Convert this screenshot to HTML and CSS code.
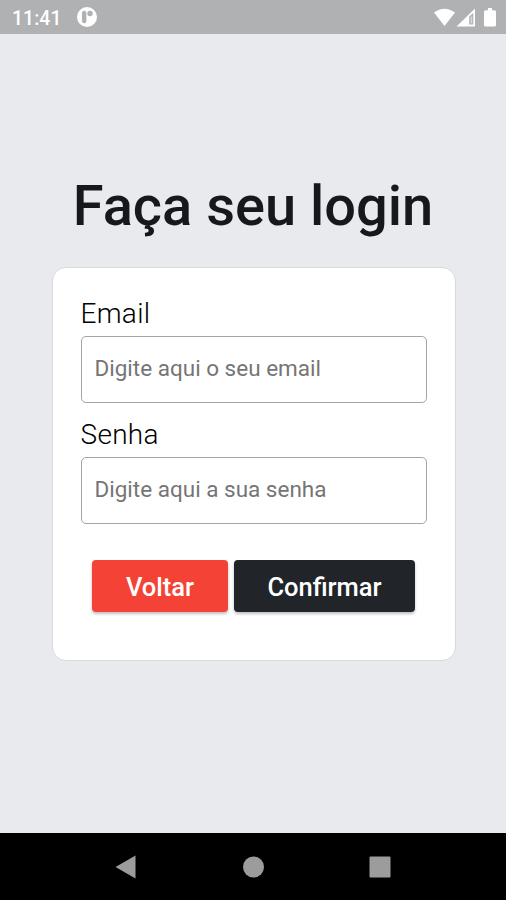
FILE: index.html
```html
<!DOCTYPE html>
<html lang="pt-BR">
  <head>
    <meta charset="UTF-8" />
    <meta name="viewport" content="width=device-width, initial-scale=1.0" />
    <title>Login</title>
    <link rel="stylesheet" href="styles.css">
  </head>
  <body>
    <header class="status-bar">
      <span class="clock">11:41</span>
      <svg class="app-icon" width="20" height="20" viewBox="0 0 20 20">
        <circle cx="10" cy="10" r="10" fill="#fff" />
        <rect x="5" y="3.800" width="4.400" height="12.400" rx="2.200" fill="#b0b1b2" />
        <circle cx="13" cy="6.500" r="2.700" fill="#b0b1b2" />
      </svg>
      <svg class="system-icons" width="63" height="20" viewBox="0 0 63 20">
        <path d="M0 5.6Q10.500-2 21 5.600L10.500 19Z" fill="#fff" />
        <path d="M22.500 19.500L41 1.500V19.500Z" fill="#fff" />
        <path d="M35.200 9.500L39.300 6V17.500H35.200Z" fill="#b0b1b2" />
        <path d="M36.600 9.500H38.200V16.500H36.600Z" fill="#d8d8d9" />
        <path d="M51.500 3.200H54V1H58V3.200H60.500Q62 3.200 62 4.700V18Q62 19.500 60.500 19.500H51.500Q50 19.500 50 18V4.700Q50 3.200 51.500 3.200Z" fill="#fff" />
      </svg>
    </header>

    <main class="login-page">
      <h1>Faça seu login</h1>
      <form class="login-card" id="loginForm">
        <div class="input-group">
          <label for="email">Email</label>
          <input type="email" id="email" placeholder="Digite aqui o seu email" autocomplete="off" />
        </div>
        <div class="input-group">
          <label for="senha">Senha</label>
          <input type="password" id="senha" placeholder="Digite aqui a sua senha" />
        </div>
        <div class="buttons">
          <button type="button" class="btn btn-back">Voltar</button>
          <button type="submit" class="btn btn-confirm">Confirmar</button>
        </div>
      </form>
    </main>

    <nav class="nav-bar">
      <svg width="22" height="24" viewBox="0 0 22 24">
        <path d="M.5 12L20.500 .5V23.500Z" fill="#9c9c9c" />
      </svg>
      <svg width="22" height="24" viewBox="0 0 22 24">
        <circle cx="11.500" cy="12" r="10.500" fill="#9c9c9c" />
      </svg>
      <svg width="22" height="24" viewBox="0 0 22 24">
        <rect x=".5" y="1.500" width="21" height="21" rx="1" fill="#9c9c9c" />
      </svg>
    </nav>
  </body>
</html>
```

FILE: styles.css
```css
:root {
  --background: #e9eaed;
  --dark: #212529;
  --red: #f44336;
}

* {
  margin: 0;
  padding: 0;
  box-sizing: border-box;
}

body {
  font-family: Roboto, sans-serif;
  background-color: var(--background);
  display: flex;
  flex-direction: column;
  height: 100vh;
  overflow: hidden;
}

.status-bar {
  display: flex;
  align-items: center;
  height: 34px;
  padding: 0 9px 0 12px;
  background-color: #b0b1b2;
  color: #fff;
}

.clock {
  padding-top: 2px;
  font-size: 19.5px;
  font-weight: 500;
}

.app-icon {
  margin-left: 16px;
}

.system-icons {
  margin-left: auto;
}

.login-page {
  flex: 1;
  display: flex;
  flex-direction: column;
  align-items: center;
  padding-top: 139px;
}

h1 {
  font-size: 56px;
  font-weight: 500;
  line-height: 66px;
  color: #15191c;
  white-space: nowrap;
}

.login-card {
  width: 404px;
  height: 394px;
  margin-top: 28px;
  margin-left: 1px;
  padding: 28px 28px 0;
  background-color: #fff;
  border: 1px solid #d8dadb;
  border-radius: 14px;
}

.input-group {
  margin-bottom: 14px;
}

.input-group label {
  display: block;
  height: 40px;
  font-size: 28px;
  line-height: 36px;
  font-weight: 300;
  letter-spacing: 0.3px;
  color: #000;
}

.input-group input {
  display: block;
  width: 346px;
  height: 67px;
  padding: 0 13px 3px;
  border: 1px solid #a5a5a5;
  border-radius: 5px;
  background-color: #fff;
  font-family: inherit;
  font-size: 22.5px;
  outline: none;
}

.input-group input::placeholder {
  color: #757575;
}

.buttons {
  display: flex;
  justify-content: center;
  gap: 6px;
  margin-top: 36px;
}

.btn {
  height: 52px;
  padding-top: 2px;
  border: none;
  border-radius: 4px;
  color: #fff;
  font-family: inherit;
  font-size: 25.5px;
  font-weight: 500;
  box-shadow: 0 2px 3px rgba(0, 0, 0, 0.25);
  cursor: pointer;
}

.btn-back {
  width: 136px;
  background-color: var(--red);
}

.btn-confirm {
  width: 181px;
  background-color: var(--dark);
}

.nav-bar {
  display: flex;
  justify-content: center;
  align-items: center;
  gap: 105px;
  height: 67px;
  background-color: #000;
}
```
